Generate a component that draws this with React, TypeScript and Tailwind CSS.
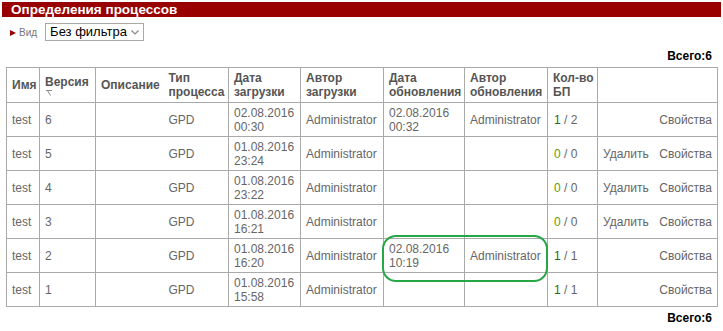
import React from "react";

type Row = {
  name: string;
  ver: string;
  type: string;
  upDate: [string, string];
  upAuthor: string;
  updDate?: [string, string];
  updAuthor?: string;
  first: string;
  second: string;
  del: boolean;
};

const rows: Row[] = [
  { name: "test", ver: "6", type: "GPD", upDate: ["02.08.2016", "00:30"], upAuthor: "Administrator", updDate: ["02.08.2016", "00:32"], updAuthor: "Administrator", first: "1", second: "2", del: false },
  { name: "test", ver: "5", type: "GPD", upDate: ["01.08.2016", "23:24"], upAuthor: "Administrator", first: "0", second: "0", del: true },
  { name: "test", ver: "4", type: "GPD", upDate: ["01.08.2016", "23:22"], upAuthor: "Administrator", first: "0", second: "0", del: true },
  { name: "test", ver: "3", type: "GPD", upDate: ["01.08.2016", "16:21"], upAuthor: "Administrator", first: "0", second: "0", del: true },
  { name: "test", ver: "2", type: "GPD", upDate: ["01.08.2016", "16:20"], upAuthor: "Administrator", updDate: ["02.08.2016", "10:19"], updAuthor: "Administrator", first: "1", second: "1", del: false },
  { name: "test", ver: "1", type: "GPD", upDate: ["01.08.2016", "15:58"], upAuthor: "Administrator", first: "1", second: "1", del: false },
];

const td = "border border-[#aaaaaa] px-[5px] py-0 align-middle whitespace-nowrap";
const th = "border border-[#aaaaaa] px-[5px] py-0 align-middle text-left font-bold text-[#555555] whitespace-nowrap";

export default function App() {
  return (
    <div
      className="relative w-[723px] h-[331px] overflow-hidden bg-white pt-[2px] px-[2px] text-[12px] leading-[14px]"
      style={{ fontFamily: '"Liberation Sans", Arial, sans-serif' }}
    >
      <div className="h-[15px] bg-[#990000] pl-[9px] text-white font-bold text-[13.5px] leading-[15px]">
        Определения процессов
      </div>

      <div className="mt-[6px] h-[18px] flex items-center">
        <svg width="6" height="6" viewBox="0 0 6 6" className="ml-[8px] mt-[2px]">
          <path d="M0 0 L6 3 L0 6 Z" fill="#990000" />
        </svg>
        <span className="ml-[3px] mt-[2px] text-[10px] text-[#777777]">Вид</span>
        <div className="ml-[8px] h-[18px] w-[99px] border border-[#a9a9a9] flex items-center pl-[4px] text-[13px] text-black">
          <span>Без фильтра</span>
          <svg width="8" height="5" viewBox="0 0 8 5" className="ml-auto mr-[4px]">
            <path d="M0.5 0.5 L4 4 L7.5 0.5" fill="none" stroke="#888888" strokeWidth="1.2" />
          </svg>
        </div>
      </div>

      <div className="mt-[8px] h-[14px] text-right pr-[9px] font-bold text-black">Всего:6</div>

      <table className="mt-[4px] ml-[4px] w-[711px] table-fixed border-collapse text-[#666666]">
        <colgroup>
          <col className="w-[33px]" />
          <col className="w-[56px]" />
          <col className="w-[68px]" />
          <col className="w-[65px]" />
          <col className="w-[72px]" />
          <col className="w-[83px]" />
          <col className="w-[81px]" />
          <col className="w-[83px]" />
          <col className="w-[50px]" />
          <col className="w-[120px]" />
        </colgroup>
        <thead>
          <tr className="h-[35px]">
            <th className={th}>Имя</th>
            <th className={th}>
              <div>Версия</div>
              <svg width="7" height="6" viewBox="0 0 7 6" className="block mt-[1px] ml-[1px]">
                <path d="M0 0.5 H6 M1.5 0.5 L4.5 5.5" fill="none" stroke="#888888" strokeWidth="1" />
              </svg>
            </th>
            <th className={th + " border-r-0"}>Описание</th>
            <th className={th + " border-l-0"}>
              Тип
              <br />
              процесса
            </th>
            <th className={th}>
              Дата
              <br />
              загрузки
            </th>
            <th className={th}>
              Автор
              <br />
              загрузки
            </th>
            <th className={th}>
              Дата
              <br />
              обновления
            </th>
            <th className={th}>
              Автор
              <br />
              обновления
            </th>
            <th className={th}>
              Кол-во
              <br />
              БП
            </th>
            <th className={th}></th>
          </tr>
        </thead>
        <tbody>
          {rows.map((r, i) => (
            <tr key={i} className="h-[34px]">
              <td className={td}>{r.name}</td>
              <td className={td}>{r.ver}</td>
              <td className={td + " border-r-0"}></td>
              <td className={td + " border-l-0"}>{r.type}</td>
              <td className={td}>
                {r.upDate[0]}
                <br />
                {r.upDate[1]}
              </td>
              <td className={td}>{r.upAuthor}</td>
              <td className={td}>
                {r.updDate ? (
                  <>
                    {r.updDate[0]}
                    <br />
                    {r.updDate[1]}
                  </>
                ) : null}
              </td>
              <td className={td}>{r.updAuthor ?? ""}</td>
              <td className={td + " pl-[6px]"}>
                <span className={r.first === "1" ? "text-[#1f6b1f]" : "text-[#669900]"}>{r.first}</span>
                <span> / {r.second}</span>
              </td>
              <td className={td}>
                <div className="flex justify-end">
                  {r.del && <span className="mr-auto">Удалить</span>}
                  <span>Свойства</span>
                </div>
              </td>
            </tr>
          ))}
        </tbody>
      </table>

      <div className="mt-[4px] h-[14px] text-right pr-[9px] font-bold text-black">Всего:6</div>

      <div className="absolute left-[382px] top-[235px] w-[166px] h-[47px] border-[2.5px] border-[#26a645] rounded-[14px] pointer-events-none" />
    </div>
  );
}
